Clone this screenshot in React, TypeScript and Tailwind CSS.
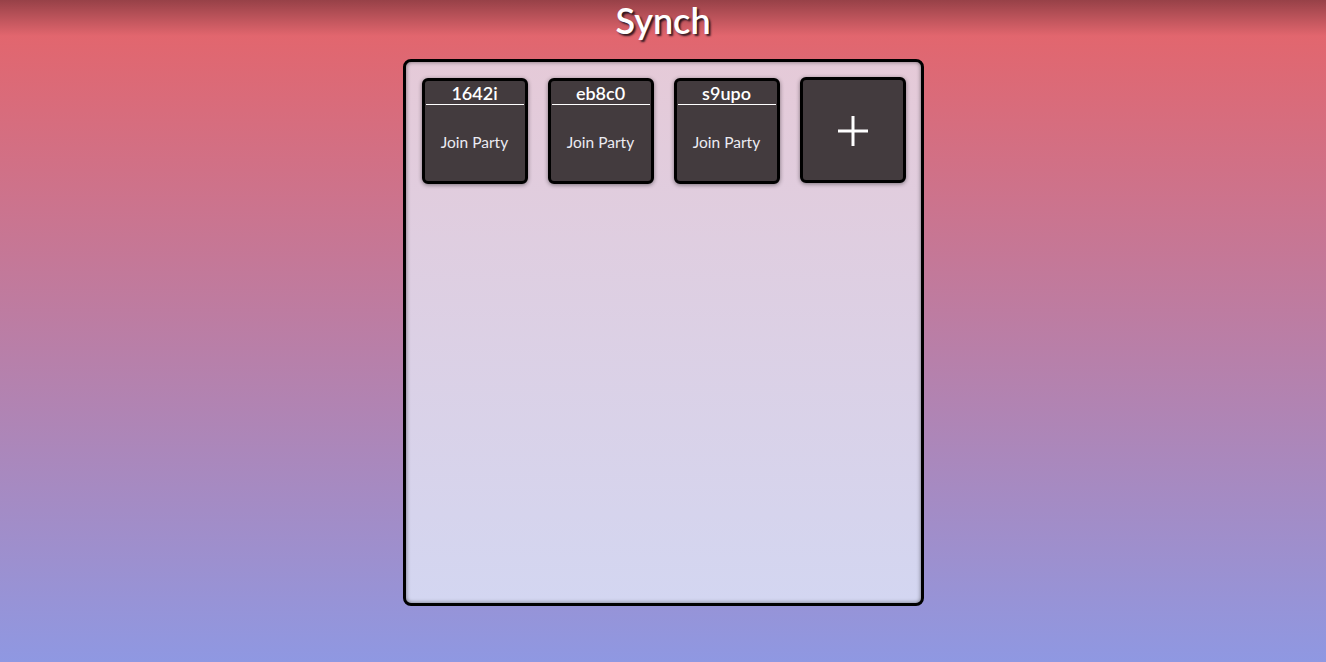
// Synch lobby: party list with join cards and a create button
const parties = ["1642i", "eb8c0", "s9upo"];

function PartyCard({ code }: { code: string }) {
  return (
    <div className="flex h-[106px] w-[106px] flex-col rounded-[6px] border-[3px] border-black bg-[#433b3e] shadow-[0_1px_4px_rgba(0,0,0,0.45)]">
      <div className="mx-[1px] flex h-[24px] items-center justify-center border-b border-white text-[18px] font-semibold leading-none text-white">
        {code}
      </div>
      <button className="flex flex-1 items-center justify-center pb-[1px] text-[15.5px] text-[#ecebf2]">
        Join Party
      </button>
    </div>
  );
}

function AddCard() {
  return (
    <button className="-mt-[1px] flex h-[106px] w-[106px] items-center justify-center rounded-[6px] border-[3px] border-black bg-[#433b3e] shadow-[0_1px_4px_rgba(0,0,0,0.45)]">
      <svg width="32" height="32" viewBox="0 0 32 32" className="mt-[1px]">
        <path d="M16 1v30M1 16h30" stroke="white" strokeWidth="3" />
      </svg>
    </button>
  );
}

export default function App() {
  return (
    <div className="relative flex min-h-[662px] flex-col items-center bg-[linear-gradient(to_bottom,#e2666e_0px,#e2666e_35px,#8f98e2_662px)] font-['Lato','Open_Sans',sans-serif]">
      <div className="pointer-events-none absolute inset-x-0 top-0 h-[36px] bg-[linear-gradient(to_bottom,rgba(60,20,25,0.45),rgba(60,20,25,0))]" />
      <h1 className="relative h-[40px] text-[36px] font-semibold leading-[40px] text-white [text-shadow:2px_2px_2px_rgba(20,10,20,0.85)]">
        Synch
      </h1>
      <div className="mt-[19px] h-[547px] w-[521px] rounded-[8px] border-[3px] border-black bg-[linear-gradient(to_bottom,#e5cad8,#d3d6f1)] pt-[16px] pl-[16px] pr-[8px] shadow-[inset_0_0_4px_rgba(0,0,0,0.5)]">
        <div className="flex flex-wrap gap-[20px]">
          {parties.map((p) => (
            <PartyCard key={p} code={p} />
          ))}
          <AddCard />
        </div>
      </div>
    </div>
  );
}
